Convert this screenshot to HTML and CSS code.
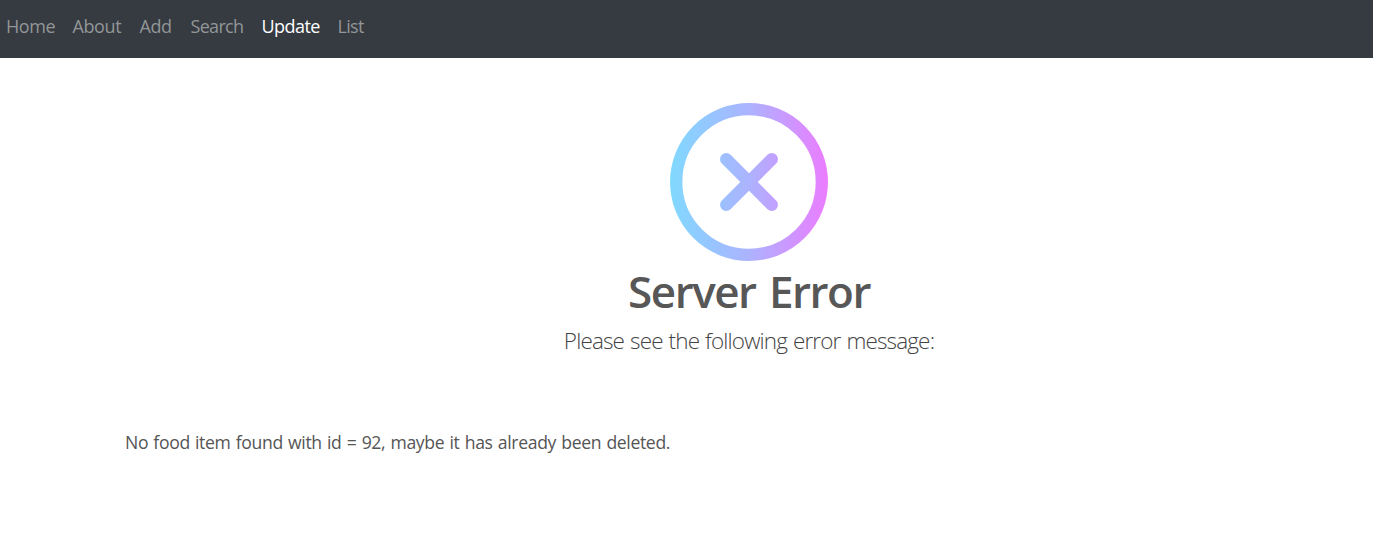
FILE: index.html
```html
<!DOCTYPE html>
<html lang="en">
<head>
<meta charset="utf-8">
<title>Server Error</title>
<link rel="stylesheet" href="styles.css">
</head>
<body>
<nav class="navbar">
  <a class="nav-link">Home</a>
  <a class="nav-link">About</a>
  <a class="nav-link">Add</a>
  <a class="nav-link search">Search</a>
  <a class="nav-link update active">Update</a>
  <a class="nav-link list">List</a>
</nav>
<main>
  <header class="hero">
    <svg class="error-icon" viewBox="0 0 158 158" fill="none">
      <defs>
        <linearGradient id="fade" gradientUnits="userSpaceOnUse" x1="0" y1="0" x2="158" y2="0">
          <stop offset="0" stop-color="#80d9ff"/>
          <stop offset="0.5" stop-color="#acb3ff"/>
          <stop offset="1" stop-color="#ec7cff"/>
        </linearGradient>
      </defs>
      <circle cx="79" cy="79" r="72.8" stroke="url(#fade)" stroke-width="12.3"/>
      <path d="M56.2 56.2L101.8 101.8M101.8 56.2L56.2 101.8" stroke="url(#fade)" stroke-width="12.3" stroke-linecap="round"/>
    </svg>
    <h1 class="title">Server Error</h1>
    <p class="lead">Please see the following error message:</p>
  </header>
  <p class="message">No food item found with id = 92, maybe it has already been deleted.</p>
</main>
</body>
</html>
```
FILE: styles.css
```css
* { box-sizing: border-box; }
body { margin: 0; background: #fff; color: #555; font-family: "Open Sans", "Noto Sans", sans-serif; }
.navbar { display: grid; grid-template-columns: 66.5px 67px 51px 71px 76px auto; height: 58px; padding: 13px 6px; background: #363a41; }
.nav-link { font-size: 18px; line-height: 26px; letter-spacing: -0.4px; color: #929697; white-space: nowrap; }
.nav-link.search { letter-spacing: -0.7px; }
.nav-link.update { letter-spacing: -0.55px; }
.nav-link.list { letter-spacing: -0.7px; }
.nav-link.active { color: #fff; }
.hero { display: flex; flex-direction: column; align-items: center; padding: 45px 0 0 125px; }
.error-icon { display: block; width: 158px; height: 158px; }
.title { margin: 0; font-size: 44px; line-height: 60px; letter-spacing: -1.5px; word-spacing: 3.6px; font-weight: 600; color: #575757; white-space: nowrap; }
.lead { margin: 4px 0 0; font-size: 22.5px; line-height: 32px; letter-spacing: -0.85px; word-spacing: 0.9px; font-weight: 300; color: #444; white-space: nowrap; }
.message { margin: 71px 0 0 125px; font-size: 17.6px; line-height: 28px; letter-spacing: -0.35px; word-spacing: 1px; white-space: nowrap; }
```
